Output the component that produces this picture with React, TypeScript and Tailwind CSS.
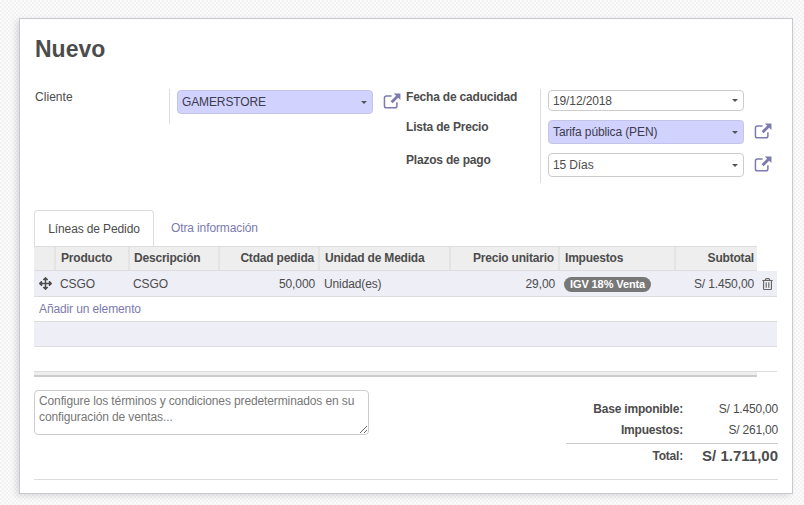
import React from 'react';
import { FaArrowsAlt, FaRegTrashAlt } from 'react-icons/fa';

const ExternalLink = () => (
  <svg viewBox="0 0 20 18" className="h-[16px] w-[18px] shrink-0 text-[#7c7bad]" fill="none">
    <path d="M15.5 10.5v4a2 2 0 0 1-2 2h-10a2 2 0 0 1-2-2v-9a2 2 0 0 1 2-2h6" stroke="currentColor" strokeWidth="1.7" />
    <path d="M12 0.5h7.5V8l-2.6-2.6-6.2 6.2-2.3-2.3 6.2-6.2z" fill="currentColor" />
  </svg>
);

const Caret = () => (
  <span className="h-0 w-0 border-x-[3px] border-t-[3px] border-x-transparent border-t-[#555555]" />
);

const Select = ({ value, required, width }: { value: string; required?: boolean; width: string }) => (
  <div
    className={`flex items-center justify-between rounded-[4px] border pl-[4px] pr-[5px] ${width} ${
      required ? 'h-[24px] border-[#c4c4e8] bg-[#d2d2ff] text-[#3c3c4c]' : 'border-[#cccccc] bg-white'
    }`}
  >
    <span>{value}</span>
    <Caret />
  </div>
);

const columns = [
  { label: '', width: 'w-[22px]', align: '' },
  { label: 'Producto', width: 'w-[74px]', align: 'pl-[5px]' },
  { label: 'Descripción', width: 'w-[90px]', align: 'pl-[4px]' },
  { label: 'Ctdad pedida', width: 'w-[100px]', align: 'pr-[4px] text-right' },
  { label: 'Unidad de Medida', width: 'w-[131px]', align: 'pl-[5px]' },
  { label: 'Precio unitario', width: 'w-[109px]', align: 'pr-[4px] text-right' },
  { label: 'Impuestos', width: 'w-[116px]', align: 'pl-[5px]' },
  { label: 'Subtotal', width: 'w-[81px]', align: 'pr-[3px] text-right' },
];

export default function App() {
  return (
    <div className="min-h-[505px] bg-[repeating-conic-gradient(#f3f3f3_0_25%,#fbfbfb_0_50%)] bg-[length:4px_4px] pl-[19px] pt-[18px] font-['Liberation_Sans',Arial,sans-serif] text-[12px] leading-[16px] tracking-[-0.12px] text-[#4c4c4c]">
      <div className="h-[476px] w-[774px] border border-[#c8c8d3] bg-white px-[14px] shadow-[-3px_2px_6px_rgba(0,0,0,0.12)]">
        <h1 className="pl-[1px] pt-[17px] text-[23px] font-bold leading-[27px] tracking-[0px]">Nuevo</h1>

        {/* Header form */}
        <div className="mt-[26px] flex h-[94px] items-start">
          <div className="w-[135px] pl-[1px] tracking-[0.05px]">Cliente</div>
          <div className="flex h-[35px] items-start border-l border-[#dddddd] pl-[7px] pt-[1px]">
            <Select value="GAMERSTORE" required width="w-[196px]" />
            <div className="ml-[10px] mt-[3px]">
              <ExternalLink />
            </div>
          </div>
          <div className="ml-[5px] flex w-[134px] flex-col font-bold tracking-[-0.2px]">
            <div className="h-[30px]">Fecha de caducidad</div>
            <div className="h-[33px]">Lista de Precio</div>
            <div>Plazos de pago</div>
          </div>
          <div className="flex h-[94px] flex-col gap-[9px] border-l border-[#dddddd] pl-[7px] pt-[1px]">
            <Select value="19/12/2018" width="h-[21px] w-[196px]" />
            <div className="flex items-start gap-[10px]">
              <Select value="Tarifa pública (PEN)" required width="w-[196px]" />
              <div className="mt-[3px]">
                <ExternalLink />
              </div>
            </div>
            <div className="flex items-start gap-[10px]">
              <Select value="15 Días" width="h-[24px] w-[196px]" />
              <div className="mt-[3px]">
                <ExternalLink />
              </div>
            </div>
          </div>
        </div>

        {/* Tabs */}
        <div className="mt-[27px] flex h-[36px]">
          <div className="z-10 flex h-[36px] w-[120px] items-center justify-center rounded-t-[4px] border border-b-0 border-[#dddddd] bg-white">
            Líneas de Pedido
          </div>
          <div className="flex items-center pl-[17px] text-[#7c7bad]">Otra información</div>
        </div>

        {/* Lines table */}
        <div className="w-[743px]">
          <div className="flex h-[25px] w-[723px] border-y border-[#dddddd] bg-[#eeeeee] font-bold tracking-[-0.2px]">
            {columns.map((col, index) => (
              <div
                key={index}
                className={`flex-none border-r-2 border-[#e4e4e4] leading-[23px] last:border-r-0 ${col.width} ${col.align}`}
              >
                {col.label}
              </div>
            ))}
          </div>
          <div className="flex h-[26px] items-center border-b border-[#dddddd] bg-[#eeeef6]">
            <div className="flex w-[22px] flex-none justify-center text-[#4c4c4c]">
              <FaArrowsAlt className="h-[13px] w-[13px]" />
            </div>
            <div className="w-[74px] flex-none pl-[4px]">CSGO</div>
            <div className="w-[90px] flex-none pl-[3px]">CSGO</div>
            <div className="w-[100px] flex-none pr-[5px] text-right">50,000</div>
            <div className="w-[131px] flex-none pl-[4px]">Unidad(es)</div>
            <div className="w-[109px] flex-none pr-[5px] text-right">29,00</div>
            <div className="w-[116px] flex-none pl-[4px]">
              <span className="inline-block h-[15px] rounded-full bg-[#777777] px-[6px] text-[11px] font-bold leading-[15px] tracking-[-0.1px] text-white">
                IGV 18% Venta
              </span>
            </div>
            <div className="w-[81px] flex-none pr-[3px] text-right">S/ 1.450,00</div>
            <div className="flex flex-1 justify-center pl-[1px] text-[#666666]">
              <FaRegTrashAlt className="h-[12px] w-[11px]" />
            </div>
          </div>
          <div className="h-[25px] border-b border-[#dddddd] pl-[5px] leading-[24px] text-[#7c7bad]">Añadir un elemento</div>
          <div className="h-[25px] border-b border-[#dddddd] bg-[#eeeef6]" />
          <div className="h-[25px] border-b border-[#dddddd]" />
          <div className="h-[5px] w-[723px] border-b-2 border-[#cccccc] bg-[#eeeeee]" />
        </div>

        {/* Notes and totals */}
        <div className="mt-[13px] flex h-[90px] w-[744px] items-start justify-between border-b border-[#dddddd]">
          <textarea
            readOnly
            placeholder="Configure los términos y condiciones predeterminados en su configuración de ventas..."
            className="h-[45px] w-[335px] rounded-[4px] border border-[#cccccc] px-[4px] py-[2px] text-[12px] leading-[16px] placeholder:text-[#777777]"
          />
          <div className="w-[212px] pt-[8px]">
            <div className="flex h-[21px] items-center font-bold tracking-[-0.2px]">
              <div className="w-[117px] text-right">Base imponible:</div>
              <div className="flex-1 text-right font-normal">S/ 1.450,00</div>
            </div>
            <div className="flex h-[25px] items-start border-b border-[#cccccc] pt-[3px] font-bold tracking-[-0.2px]">
              <div className="w-[117px] text-right">Impuestos:</div>
              <div className="flex-1 text-right font-normal">S/ 261,00</div>
            </div>
            <div className="flex h-[24px] items-center font-bold">
              <div className="w-[117px] text-right tracking-[-0.2px]">Total:</div>
              <div className="flex-1 text-right text-[15px] tracking-[0px]">S/ 1.711,00</div>
            </div>
          </div>
        </div>
      </div>
    </div>
  );
}
